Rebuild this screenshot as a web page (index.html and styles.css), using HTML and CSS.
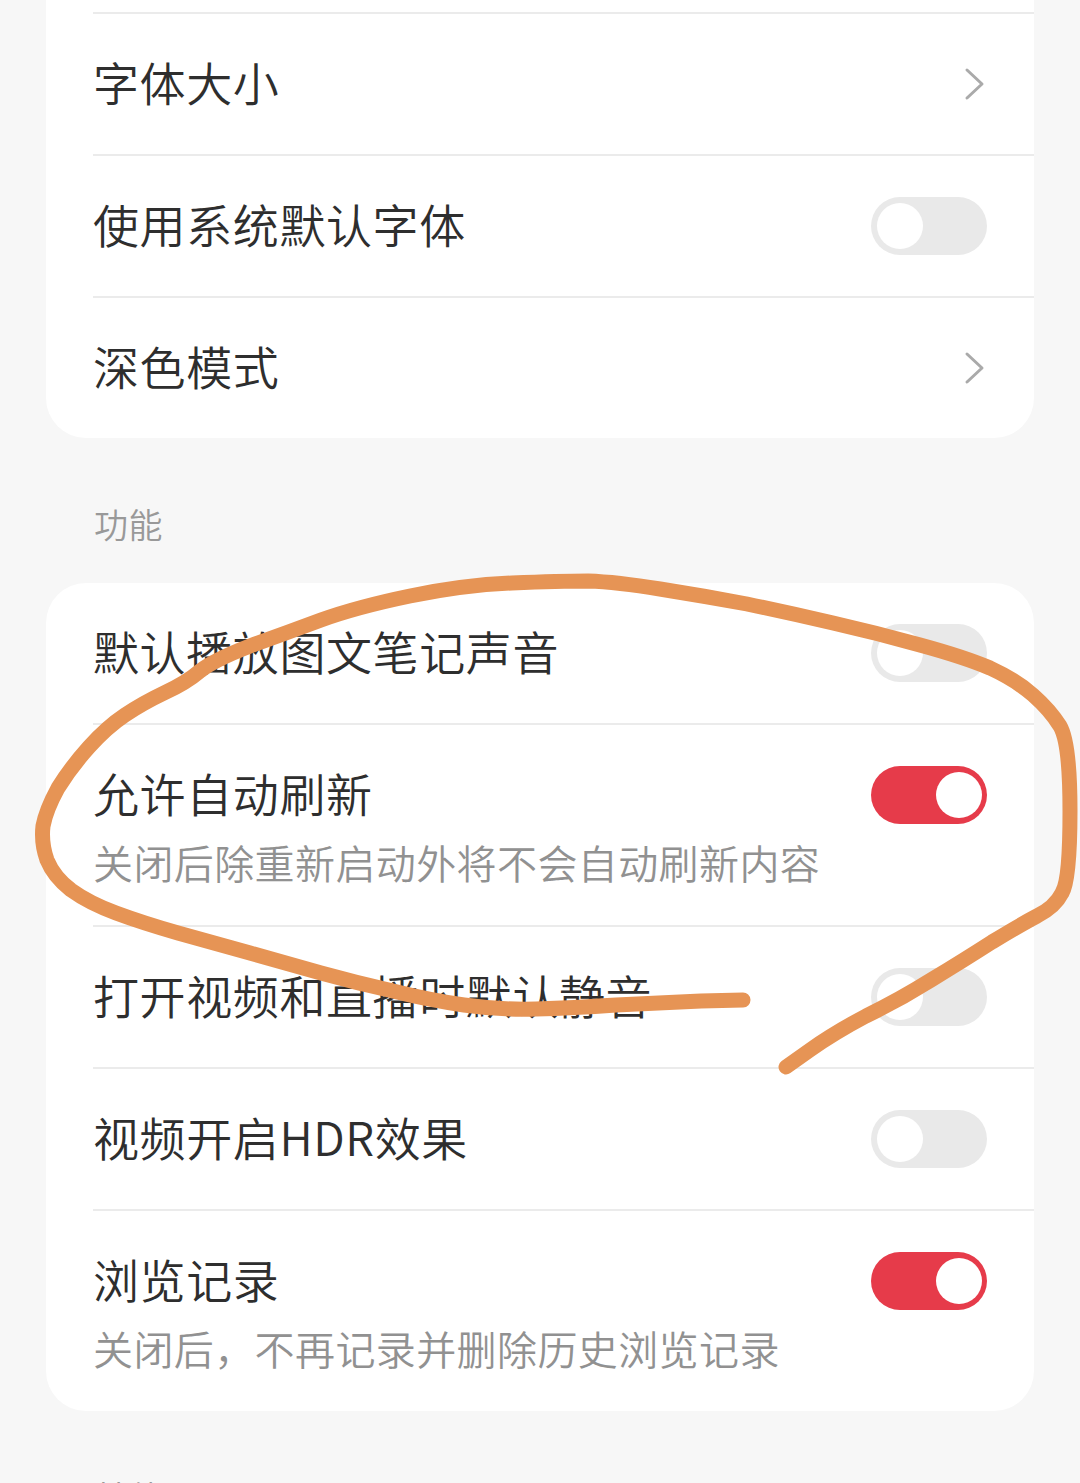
FILE: index.html
```html
<!DOCTYPE html>
<html lang="zh-CN">
<head>
    <meta charset="UTF-8">
    <meta name="viewport" content="width=device-width, initial-scale=1.0">
    <title>通用设置</title>
    <link rel="stylesheet" href="styles.css">
</head>
<body>
    <div class="page">
        <div class="card first">
            <div class="row"><div class="row-head"></div></div>
            <div class="row">
                <div class="row-head">
                    <span class="title">字体大小</span>
                    <svg class="chevron" width="22" height="34" viewBox="0 0 22 34"><polyline points="3,3 18,17 3,31"/></svg>
                </div>
            </div>
            <div class="row">
                <div class="row-head">
                    <span class="title">使用系统默认字体</span>
                    <span class="switch"><span class="knob"></span></span>
                </div>
            </div>
            <div class="row">
                <div class="row-head">
                    <span class="title">深色模式</span>
                    <svg class="chevron" width="22" height="34" viewBox="0 0 22 34"><polyline points="3,3 18,17 3,31"/></svg>
                </div>
            </div>
        </div>

        <div class="section-label">功能</div>

        <div class="card">
            <div class="row">
                <div class="row-head">
                    <span class="title">默认播放图文笔记声音</span>
                    <span class="switch"><span class="knob"></span></span>
                </div>
            </div>
            <div class="row with-desc">
                <div class="row-head">
                    <span class="title">允许自动刷新</span>
                    <span class="switch on"><span class="knob"></span></span>
                </div>
                <div class="desc">关闭后除重新启动外将不会自动刷新内容</div>
            </div>
            <div class="row">
                <div class="row-head">
                    <span class="title">打开视频和直播时默认静音</span>
                    <span class="switch"><span class="knob"></span></span>
                </div>
            </div>
            <div class="row">
                <div class="row-head">
                    <span class="title">视频开启HDR效果</span>
                    <span class="switch"><span class="knob"></span></span>
                </div>
            </div>
            <div class="row with-desc">
                <div class="row-head">
                    <span class="title">浏览记录</span>
                    <span class="switch on"><span class="knob"></span></span>
                </div>
                <div class="desc">关闭后，不再记录并删除历史浏览记录</div>
            </div>
        </div>

        <div class="section-label">其他</div>
    </div>

    <!-- hand-drawn mark over the screenshot -->
    <svg class="scribble" width="1080" height="1483" viewBox="0 0 1080 1483">
        <path d="M743 1000 L701 1001 Q660 1003 616 1005 Q573 1008 536 1009 Q500 1010 464 1005 Q429 1000 393 991 Q357 983 321 973 Q286 963 250 953 Q214 943 178 933 Q143 923 116 913 Q89 903 71 890 Q54 877 47 860 Q41 843 43 826 Q46 810 58 788 Q71 767 89 747 Q107 727 125 715 Q143 703 164 693 Q186 683 200 671 Q214 660 250 646 Q286 633 321 620 Q357 607 410 596 Q464 585 512 583 Q560 581 588 581 Q617 582 660 589 Q704 596 747 604 Q790 613 833 623 Q877 633 920 645 Q964 657 990 668 Q1016 680 1033 695 Q1050 710 1060 726 Q1070 743 1070 811 Q1070 880 1062 893 Q1055 907 1037 916 Q1020 925 992 942 Q964 960 931 980 Q899 1000 866 1016 Q834 1033 810 1050 L786 1067"/>
    </svg>
</body>
</html>
```

FILE: styles.css
```css
html, body {
    overflow: hidden;
}
body {
    margin: 0;
    background: #f7f7f7;
    font-family: "Noto Sans CJK SC", "Noto Sans", sans-serif;
    font-weight: 350;
    color: #2e2e2e;
    position: relative;
}
.page {
    padding: 0 46px;
}
.card {
    background: #fff;
    border-radius: 40px;
}
.card.first {
    margin-top: -128px;
}
.row {
    margin-left: 47px;
    padding: 40px 47px 40px 0;
    border-top: 2px solid #ebebeb;
}
.row:first-child {
    border-top: none;
}
.row.with-desc {
    padding-bottom: 39px;
}
.row-head {
    display: flex;
    align-items: center;
    justify-content: space-between;
    height: 60px;
}
.title {
    font-size: 46px;
    line-height: 60px;
    letter-spacing: 0.6px;
    padding-bottom: 6px;
}
.desc {
    font-size: 40px;
    line-height: 48px;
    letter-spacing: 0.4px;
    color: #919191;
    margin-top: 13px;
}
.section-label {
    font-size: 34px;
    line-height: 48px;
    letter-spacing: 0.5px;
    color: #999;
    padding: 62px 0 35px 48px;
}
.chevron {
    margin-right: 1px;
}
.chevron polyline {
    fill: none;
    stroke: #aaa;
    stroke-width: 3;
    stroke-linecap: round;
    stroke-linejoin: round;
}
.switch {
    width: 116px;
    height: 58px;
    box-sizing: border-box;
    padding: 6px;
    border-radius: 29px;
    background: #e9e9e9;
    display: flex;
}
.switch.on {
    background: #e63b4a;
    justify-content: flex-end;
    padding: 6px 5px;
}
.knob {
    width: 46px;
    height: 46px;
    border-radius: 50%;
    background: #fff;
}
.scribble {
    position: absolute;
    top: 0;
    left: 0;
    pointer-events: none;
}
.scribble path {
    fill: none;
    stroke: #e69455;
    stroke-width: 15;
    stroke-linecap: round;
    stroke-linejoin: round;
}
```
